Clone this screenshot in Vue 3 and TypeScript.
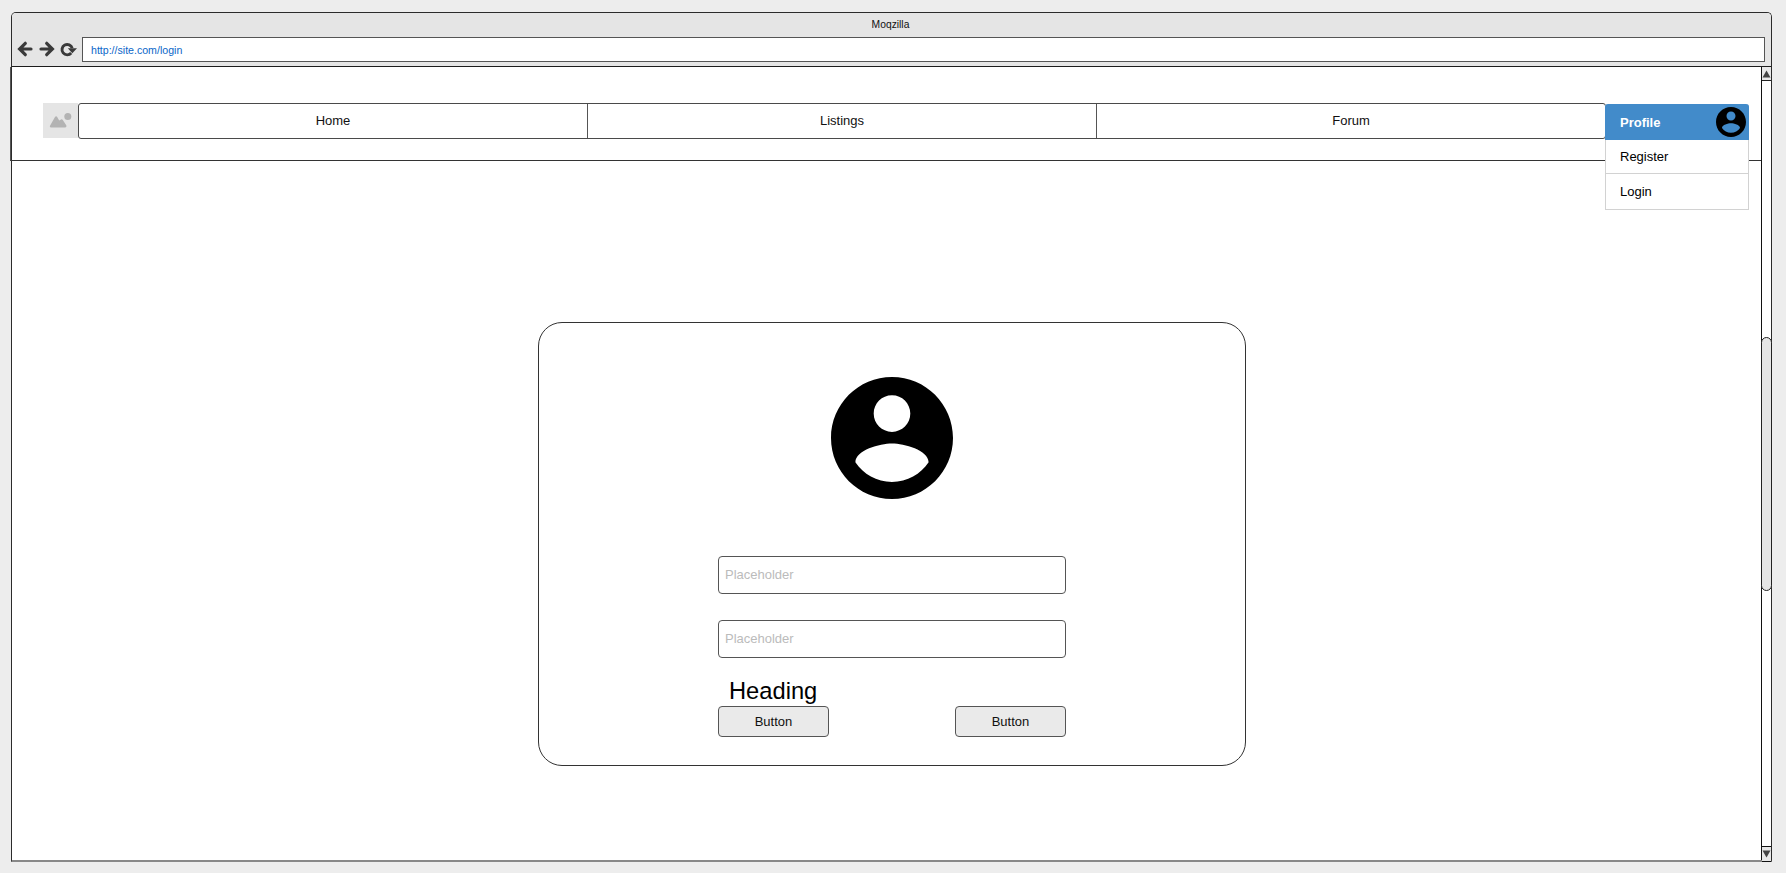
<script setup lang="ts">
import { ref } from 'vue'

const url = ref<string>('http://site.com/login')
const navItems: string[] = ['Home', 'Listings', 'Forum']
const menuItems: string[] = ['Register', 'Login']
const fields = ref<string[]>(['', ''])
const avatarPath =
  'M12 2C6.48 2 2 6.48 2 12s4.48 10 10 10 10-4.48 10-10S17.52 2 12 2zm0 3c1.66 0 3 1.34 3 3s-1.34 3-3 3-3-1.34-3-3 1.34-3 3-3zm0 14.2c-2.5 0-4.71-1.28-6-3.22.03-1.99 4-3.08 6-3.08 1.99 0 5.97 1.09 6 3.08-1.29 1.94-3.5 3.22-6 3.22z'
</script>

<template>
  <div class="page">
    <div class="window">
      <header class="chrome">
        <div class="title">Moqzilla</div>
        <div class="toolbar">
          <svg class="tool-icons" width="60" height="16" viewBox="0 0 60 16">
            <g fill="none" stroke="#3a3a3a" stroke-width="3.2">
              <path d="M14 8H3M8.300 2.300L2.600 8l5.700 5.700" stroke-linecap="round" />
              <path d="M24 8h11M29.700 2.300L35.400 8l-5.700 5.700" stroke-linecap="round" />
              <path d="M54.200 12A5.200 5.200 0 1 1 55.200 7.200" stroke-width="2.900" />
            </g>
            <path d="M50.800 7.200h9.200L55.300 12.200z" fill="#3a3a3a" />
          </svg>
          <div class="address">{{ url }}</div>
        </div>
      </header>
      <div class="body">
        <main class="content">
          <div class="topbar">
            <div class="logo">
              <svg width="35" height="35" viewBox="0 0 35 35">
                <path
                  d="M7 22.800L12 14Q13.100 12.400 14.200 14L16.200 17.500L18 16.500Q19 15.900 19.800 17L23.400 22.600Q23.900 24.400 22.300 24.400H8Q6.200 24.400 7 22.800Z"
                  fill="#b3b3b3"
                />
                <circle cx="24.800" cy="13.600" r="3.500" fill="#b3b3b3" />
              </svg>
            </div>
            <nav class="nav">
              <a v-for="item in navItems" :key="item" class="nav-item">{{ item }}</a>
            </nav>
            <div class="menu">
              <div class="menu-head">
                <span>Profile</span>
                <svg class="menu-avatar" viewBox="2 2 20 20"><path :d="avatarPath" /></svg>
              </div>
              <div v-for="item in menuItems" :key="item" class="menu-item">{{ item }}</div>
            </div>
          </div>
          <section class="card">
            <svg class="avatar" viewBox="2 2 20 20"><path :d="avatarPath" /></svg>
            <input v-for="(_, i) in fields" :key="i" v-model="fields[i]" class="field" placeholder="Placeholder" />
            <h2 class="heading">Heading</h2>
            <div class="actions">
              <button class="btn">Button</button>
              <button class="btn">Button</button>
            </div>
          </section>
        </main>
        <aside class="scrollbar">
          <div class="arrow">
            <svg width="9" height="8" viewBox="0 0 9 8"><path d="M4.500 0.500L8.500 7.500h-8z" fill="#444" /></svg>
          </div>
          <div class="thumb"></div>
          <div class="arrow arrow-down">
            <svg width="9" height="8" viewBox="0 0 9 8"><path d="M0.500 0.500h8L4.500 7.500z" fill="#444" /></svg>
          </div>
        </aside>
      </div>
    </div>
  </div>
</template>

<style>
body {
  margin: 0;
  background: #ededed;
}
</style>

<style scoped>
.page,
.page * {
  box-sizing: border-box;
}
.page {
  height: 873px;
  padding: 12px 14px 11px 11px;
  background: #ededed;
  font-family: 'Liberation Sans', Arial, sans-serif;
  font-size: 13px;
  color: #111;
  overflow: hidden;
}
.window {
  display: flex;
  flex-direction: column;
  height: 850px;
  border: 1px solid #2b2b2b;
  border-bottom: 2px solid #888;
  border-radius: 5px 5px 0 0;
  background: #fff;
}
.chrome {
  height: 54px;
  border-bottom: 1px solid #1c1c1c;
  border-radius: 4px 4px 0 0;
  background: #e5e5e5;
}
.title {
  height: 24px;
  line-height: 23px;
  text-align: center;
  font-size: 10.3px;
  padding-right: 2px;
}
.toolbar {
  display: flex;
  align-items: flex-start;
  padding: 0 6px 0 5px;
}
.tool-icons {
  flex: none;
  margin: 4px 5px 0 0;
}
.address {
  flex: 1;
  height: 25px;
  border: 1px solid #555;
  background: #fff;
  padding-left: 8px;
  line-height: 24px;
  font-size: 10.600px;
  color: #0a66c8;
}
.body {
  flex: 1;
  display: flex;
  min-height: 0;
}
.content {
  flex: 1;
  min-width: 0;
}
.topbar {
  position: relative;
  display: flex;
  height: 94px;
  margin-left: -2px;
  padding: 36px 155px 0 32px;
  border-left: 1px solid #555;
  border-bottom: 1px solid #333;
}
.logo {
  width: 35px;
  height: 35px;
  background: #e5e5e5;
  flex: none;
}
.logo svg {
  display: block;
}
.nav {
  flex: 1;
  display: flex;
  height: 36px;
  border: 1px solid #4a4a4a;
  border-radius: 3px;
}
.nav-item {
  flex: 1;
  text-align: center;
  line-height: 33px;
}
.nav-item + .nav-item {
  border-left: 1px solid #555;
}
.menu {
  position: absolute;
  left: 1594px;
  top: 37px;
  width: 144px;
  height: 106px;
  border: 1px solid #d2d2d2;
  border-top: 0;
  border-radius: 3px 3px 0 0;
  background: #fff;
  color: #000;
}
.menu-head {
  display: flex;
  align-items: center;
  justify-content: space-between;
  height: 36px;
  margin: 0 -1px;
  padding: 0 3px 0 15px;
  border-radius: 3px 3px 0 0;
  background: #428bca;
  color: #fff;
  font-weight: bold;
}
.menu-avatar {
  width: 30px;
  height: 30px;
  margin-top: -1px;
}
.menu-item {
  height: 33px;
  padding-left: 14px;
  line-height: 33px;
}
.menu-item + .menu-item {
  height: 36px;
  border-top: 1px solid #d2d2d2;
  line-height: 35px;
}
.card {
  display: flex;
  flex-direction: column;
  align-items: center;
  width: 708px;
  height: 444px;
  margin: 161px auto 0 526px;
  padding-top: 54px;
  border: 1px solid #333;
  border-radius: 24px;
}
.avatar {
  width: 122px;
  height: 122px;
  margin-right: 1px;
  margin-bottom: 57px;
}
.field {
  width: 348px;
  height: 38px;
  margin: 0 0 26px;
  padding: 0 6px 2px;
  border: 1px solid #555;
  border-radius: 4px;
  background: #fff;
  font: inherit;
  outline: none;
}
.field::placeholder {
  color: #bbb;
  opacity: 1;
}
.heading {
  width: 348px;
  height: 27px;
  margin: -6px 0 0;
  padding-left: 11px;
  font-size: 23.700px;
  line-height: 27px;
  font-weight: normal;
  color: #000;
}
.actions {
  display: flex;
  justify-content: space-between;
  width: 348px;
  margin-top: 1px;
}
.btn {
  width: 111px;
  height: 31px;
  padding: 0 0 1px;
  border: 1px solid #555;
  border-radius: 4px;
  background: #eaeaea;
  font: inherit;
  color: #111;
}
.scrollbar {
  display: flex;
  flex-direction: column;
  width: 10px;
  border-left: 1px solid #111;
}
.arrow {
  display: flex;
  align-items: center;
  justify-content: center;
  flex: none;
  height: 14px;
  background: #e8e8e8;
  border-bottom: 1px solid #222;
}
.arrow-down {
  height: 16px;
  margin-top: auto;
  margin-bottom: -2px;
  border-top: 1px solid #111;
  border-bottom: 1px solid #111;
}
.thumb {
  height: 254px;
  margin: 256px -1px 0;
  border: 1px solid #222;
  border-radius: 6px;
  background: #e5e5e5;
}
</style>
